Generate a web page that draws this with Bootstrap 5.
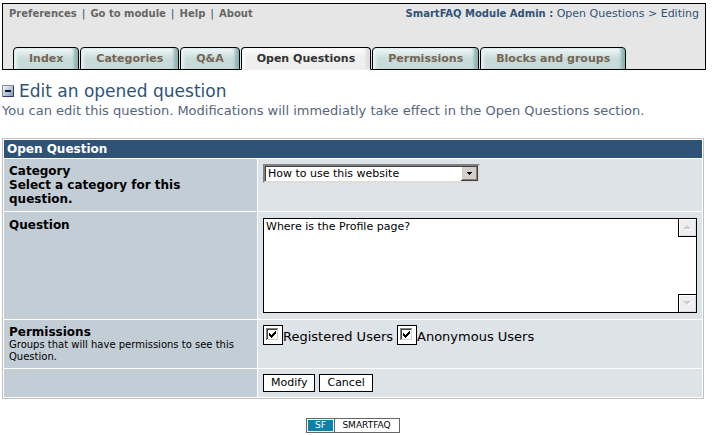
<!DOCTYPE html>
<html lang="en">
<head>
<meta charset="utf-8">
<meta name="viewport" content="width=device-width, initial-scale=1">
<title>SmartFAQ Module Admin</title>
<link rel="stylesheet" href="https://cdn.jsdelivr.net/npm/bootstrap@5.3.0/dist/css/bootstrap.min.css">
<style>
body{font-family:Verdana,"DejaVu Sans",sans-serif;font-size:12px;line-height:14px;color:#000;padding:3px 7px 0 2px}
a{text-decoration:none;color:#666}
.admin-head{background:#e6e6e6;border:1px solid #000;height:67px;color:#2f5376;font-size:11px}
.admin-menu{padding:3px 6px 0}
.admin-menu a,.admin-menu b{font-weight:bold;font-size:10px}
.menu-links{gap:5px}
.tabs{padding-left:10px;gap:1px;margin-bottom:-1px}
.tab-link{border:1px solid #000;border-radius:4px 4px 0 0;height:23px;padding:4px 15px 0;font-weight:bold;font-size:11px;color:#766555;background:linear-gradient(#f2f8f8,#c7dbd9 11px);box-shadow:inset 4px 0 3px -1px #e4f1f1,inset -5px 0 3px -1px #8fb4b4}
.tab-link.current{color:#333;background:linear-gradient(#fff,#efefef 9px);border-bottom-color:#efefef;box-shadow:inset 4px 0 3px -1px #fafafa,inset -5px 0 3px -1px #ddd}
.page-title{font-size:17px;line-height:22px;color:#2f5376;gap:5px;margin:10px 0 0}
.page-note{font-size:13px;line-height:18px;color:#566578;margin:0 0 18px}
.form-grid{border:1px solid silver;border-collapse:separate;border-spacing:1px;width:calc(100% - 2px)}
.form-grid th,.form-grid td{vertical-align:top}
.form-grid thead th{background:#2f5376;color:#fff;height:18px;padding:2px 3px}
.form-grid tbody th{background:#c2cdd6;width:253px;padding:5px}
.form-grid td{background:#dee3e7;padding:5px}
.form-grid .tall-row>*{padding-top:6px;padding-bottom:6px}
.hint{font-size:10px;line-height:12px;font-weight:normal}
.pick{appearance:none;width:217px;height:19px;border:2px solid;border-color:#808080 #e0ddd6 #e0ddd6 #808080;box-shadow:inset 1px 1px #404040;border-radius:0;font-size:11px;padding:0 20px 0 3px;color:#000;background:#fff url("data:image/svg+xml,%3Csvg xmlns='http://www.w3.org/2000/svg' width='17' height='15' shape-rendering='crispEdges'%3E%3Cpath fill='%23404040' d='M0 0h17v15H0z'/%3E%3Cpath fill='%23fff' d='M0 0h16v14H0z'/%3E%3Cpath fill='%23808080' d='M1 1h15v13H1z'/%3E%3Cpath fill='%23d4d0c8' d='M1 1h14v12H1z'/%3E%3Cpath d='M6 6h5v1H6zM7 7h3v1H7zM8 8h1v1H8z'/%3E%3C/svg%3E") no-repeat right center}
.answer{border:1px solid #000;border-radius:0;height:95px;padding:1px 20px 1px 2px;font-size:11px;resize:none;overflow:hidden;color:#000;background:#fff}
.scroll-end{width:19px;height:19px;border:1px solid #000;background:#eee;box-shadow:inset 1px 1px #fff,inset -1px -1px #ddd;right:0}
.groups{font-size:13px}
.groups label{padding-top:4px}
.tick{appearance:none;width:20px;height:20px;border:1px solid #000;margin:0;background:#fff}
.tick:checked{background:#fff url("data:image/svg+xml,%3Csvg xmlns='http://www.w3.org/2000/svg' width='18' height='18' shape-rendering='crispEdges'%3E%3Cpath fill='%23d4d0c8' d='M2 2h12v12H2z'/%3E%3Cpath fill='%23808080' d='M2 2h12v1H3v11H2z'/%3E%3Cpath fill='%23404040' d='M3 3h10v1H4v9H3z'/%3E%3Cpath fill='%23fff' d='M4 4h9v9H4z'/%3E%3Cpath d='M5 7h1v1h1v1h1V8h1V7h1V6h1V5h1v3h-1v1h-1v1H9v1H8v1H7v-1H6v-1H5z'/%3E%3C/svg%3E")}
.push{border:1px solid #000;border-radius:0;background:#fff;color:#000;font-size:11px;line-height:14px;height:18px;padding:0 7px}
.sf-badge{border:1px solid #666;padding:1px;font-size:9px;line-height:11px;color:#000;background:#fff;width:94px;height:15px}
.sf-badge span:first-child{background:#0a81ab;color:#fff;width:25px;margin-right:1px}
.sf-badge span:last-child{border-left:1px solid #666;margin:-1px 0;padding-top:1px}
footer{margin-top:19px;padding-right:2px}
</style>
</head>
<body>
<header class="admin-head d-flex flex-column justify-content-between">
  <div class="admin-menu d-flex justify-content-between">
    <nav class="menu-links d-flex" aria-label="Module"><a href="#">Preferences</a><span>|</span><a href="#">Go to module</a><span>|</span><a href="#">Help</a><span>|</span><a href="#">About</a></nav>
    <div><b>SmartFAQ Module Admin :</b> Open Questions &gt; Editing</div>
  </div>
  <nav class="tabs d-flex" aria-label="Sections">
    <a class="tab-link" href="#">Index</a>
    <a class="tab-link" href="#">Categories</a>
    <a class="tab-link" href="#">Q&amp;A</a>
    <a class="tab-link current" href="#" aria-current="page">Open Questions</a>
    <a class="tab-link" href="#">Permissions</a>
    <a class="tab-link" href="#">Blocks and groups</a>
  </nav>
</header>
<main>
  <h1 class="page-title d-flex align-items-center fw-normal">
    <svg width="12" height="12" shape-rendering="crispEdges" aria-hidden="true"><defs><linearGradient id="fold" x2="1" y2="1"><stop stop-color="#f4f7fa"/><stop offset="1" stop-color="#7e99b8"/></linearGradient></defs><path fill="#8c8ca0" d="M0 0h12v12H0z"/><path fill="#333b63" d="M11 1h1v11H1v-1h10z"/><path fill="url(#fold)" d="M1 1h10v10H1z"/><path fill="#101828" d="M3 5h6v2H3z"/></svg>
    Edit an opened question</h1>
  <p class="page-note">You can edit this question. Modifications will immediatly take effect in the Open Questions section.</p>
  <form>
    <table class="form-grid">
      <thead><tr><th colspan="2" scope="colgroup">Open Question</th></tr></thead>
      <tbody>
        <tr><th scope="row"><label for="category">Category<br>Select a category for this<br>question.</label></th>
          <td><select class="pick d-block" id="category"><option>How to use this website</option></select></td></tr>
        <tr class="tall-row"><th scope="row"><label for="question">Question</label></th>
          <td><div class="position-relative"><textarea class="answer d-block w-100" id="question">Where is the Profile page?</textarea>
            <span class="scroll-end position-absolute top-0 d-flex align-items-center justify-content-center" aria-hidden="true"><svg width="9" height="5"><path fill="#fff" d="M1 5l4-4 4 4z"/><path fill="#ccc" d="M0 4l4-4 4 4z"/></svg></span>
            <span class="scroll-end position-absolute bottom-0 d-flex align-items-center justify-content-center" aria-hidden="true"><svg width="9" height="5"><path fill="#fff" d="M1 1h8l-4 4z"/><path fill="#ccc" d="M0 0h8l-4 4z"/></svg></span></div></td></tr>
        <tr><th scope="row">Permissions<div class="hint">Groups that will have permissions to see this Question.</div></th>
          <td><div class="groups d-flex align-items-center"><input class="tick" type="checkbox" id="reg" checked><label for="reg" class="me-1">Registered Users</label><input class="tick" type="checkbox" id="anon" checked><label for="anon">Anonymous Users</label></div></td></tr>
        <tr><th></th><td><div class="d-flex gap-1"><button class="push" type="submit">Modify</button><button class="push" type="button">Cancel</button></div></td></tr>
      </tbody>
    </table>
  </form>
</main>
<footer class="d-flex justify-content-center"><a class="sf-badge d-flex text-center" href="#"><span>SF</span><span class="flex-fill">SMARTFAQ</span></a></footer>
<script src="https://cdn.jsdelivr.net/npm/bootstrap@5.3.0/dist/js/bootstrap.bundle.min.js"></script>
</body>
</html>
